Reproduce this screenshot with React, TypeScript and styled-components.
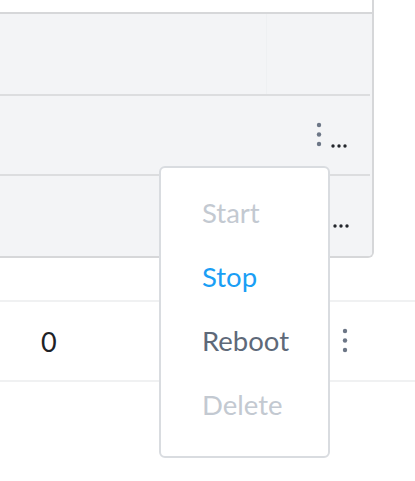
import styled, { createGlobalStyle } from 'styled-components';

const GlobalStyle = createGlobalStyle`
  html, body {
    margin: 0;
    padding: 0;
    background: #ffffff;
  }
  body {
    font-family: Lato, 'Liberation Sans', Arial, sans-serif;
  }
`;

const Page = styled.div`
  position: relative;
  width: 415px;
  height: 481px;
  overflow: hidden;
  background: #ffffff;
`;

const Card = styled.div`
  width: 372px;
  border-right: 2px solid #d6d7d9;
  border-bottom: 2px solid #d6d7d9;
  border-bottom-right-radius: 6px;
  overflow: hidden;
`;

const CardHeader = styled.div`
  height: 12px;
  background: #ffffff;
`;

const Table = styled.div`
  display: flex;
  flex-direction: column;
  background: #f3f4f6;
  border-top: 2px solid #d6d7d9;
`;

const Row = styled.div<{ height: number; last?: boolean }>`
  display: flex;
  height: ${(p) => p.height}px;
  border-bottom: ${(p) => (p.last ? 'none' : '2px solid #dcdddf')};
  margin-right: ${(p) => (p.last ? '0' : '2px')};
`;

const Cell = styled.div<{ width?: number; divider?: boolean }>`
  flex: ${(p) => (p.width ? `0 0 ${p.width}px` : '1')};
  border-left: ${(p) => (p.divider ? '1px solid #eef0f2' : 'none')};
`;

const ActionCell = styled.div<{ offset: number }>`
  flex: 1;
  display: flex;
  justify-content: flex-end;
  align-items: flex-start;
  padding-top: ${(p) => p.offset}px;
  padding-right: 22px;
  gap: 8px;
`;

const Kebab = styled.svg<{ color: string }>`
  display: block;
  fill: ${(p) => p.color};
`;

const Gap = styled.div`
  height: 42px;
`;

const OuterRow = styled.div`
  display: flex;
  align-items: center;
  height: 78px;
  border-top: 2px solid #f0f1f2;
  border-bottom: 2px solid #f0f1f2;
`;

const CountCell = styled.div`
  flex: 0 0 300px;
  padding-left: 41px;
  font-size: 27px;
  color: #1e2226;
`;

const OuterAction = styled.div`
  flex: 1;
  display: flex;
  justify-content: flex-end;
  padding-right: 67px;
`;

const Menu = styled.ul`
  position: absolute;
  left: 159px;
  top: 166px;
  width: 167px;
  height: 276px;
  margin: 0;
  padding: 12px 0 0;
  list-style: none;
  background: #ffffff;
  border: 2px solid #d9dce0;
  border-radius: 6px;
`;

const MenuItem = styled.li<{ tone: 'disabled' | 'active' | 'normal' }>`
  height: 64px;
  display: flex;
  align-items: center;
  padding-left: 41px;
  font-size: 27.5px;
  color: ${(p) => (p.tone === 'active' ? '#1a9ef5' : p.tone === 'normal' ? '#5e6979' : '#c3c9d1')};
`;

function VerticalDots({ color }: { color: string }) {
  return (
    <Kebab color={color} width="6" height="26" viewBox="0 0 6 26">
      <circle cx="3" cy="3" r="2.2" />
      <circle cx="3" cy="12.5" r="2.2" />
      <circle cx="3" cy="22" r="2.2" />
    </Kebab>
  );
}

function HorizontalDots() {
  return (
    <Kebab color="#23262b" width="18" height="6" viewBox="0 0 18 6">
      <circle cx="3" cy="3" r="1.7" />
      <circle cx="9" cy="3" r="1.7" />
      <circle cx="15" cy="3" r="1.7" />
    </Kebab>
  );
}

const MENU: { label: string; tone: 'disabled' | 'active' | 'normal' }[] = [
  { label: 'Start', tone: 'disabled' },
  { label: 'Stop', tone: 'active' },
  { label: 'Reboot', tone: 'normal' },
  { label: 'Delete', tone: 'disabled' },
];

export default function App() {
  return (
    <Page>
      <GlobalStyle />
      <Card>
        <CardHeader />
        <Table>
          <Row height={80}>
            <Cell width={266} />
            <Cell divider />
          </Row>
          <Row height={78}>
            <ActionCell offset={26}>
              <VerticalDots color="#6c7686" />
              <div style={{ paddingTop: 21 }}>
                <HorizontalDots />
              </div>
            </ActionCell>
          </Row>
          <Row height={80} last>
            <ActionCell offset={47}>
              <HorizontalDots />
            </ActionCell>
          </Row>
        </Table>
      </Card>
      <Gap />
      <OuterRow>
        <CountCell>0</CountCell>
        <OuterAction>
          <VerticalDots color="#6c7686" />
        </OuterAction>
      </OuterRow>
      <Menu>
        {MENU.map((item) => (
          <MenuItem key={item.label} tone={item.tone}>
            {item.label}
          </MenuItem>
        ))}
      </Menu>
    </Page>
  );
}
